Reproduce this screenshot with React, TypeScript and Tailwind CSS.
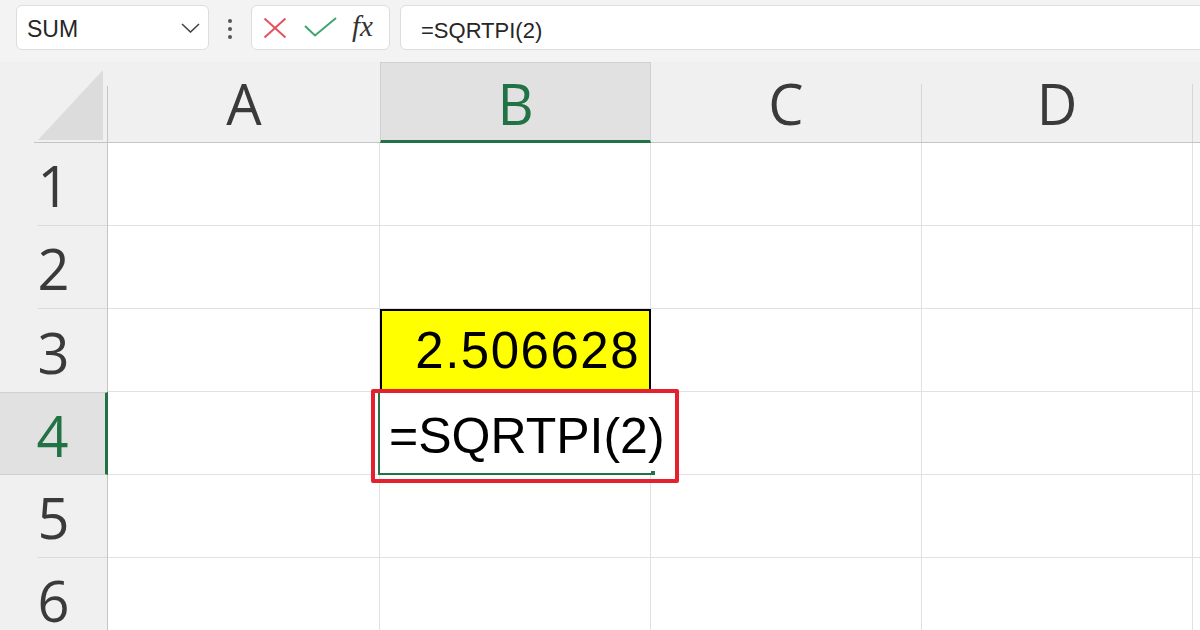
import React from "react";

const GREEN = "#217346";

function HeaderLabel({ children, green }: { children: React.ReactNode; green?: boolean }) {
  return (
    <span
      className={`flex-1 flex items-center justify-center pt-[2px] text-[56px] leading-none font-['Open_Sans',sans-serif] ${
        green ? "text-[#217346]" : "text-[#3a3a3a]"
      }`}
    >
      {children}
    </span>
  );
}

export default function App() {
  const rows = [1, 2, 3, 4, 5, 6];
  return (
    <div className="w-[1200px] h-[630px] overflow-hidden bg-white font-['Liberation_Sans',Arial,sans-serif]">
      {/* Formula bar */}
      <div className="h-[62px] bg-[#f3f3f3] flex items-start pt-[5px] pl-[16px] overflow-hidden">
        <div className="w-[193px] h-[45px] shrink-0 bg-white border border-[#dddddd] rounded-[6px] flex items-center pl-[10px] pr-[8px] pt-[3px]">
          <span className="flex-1 text-[23px] leading-none text-[#262626]">SUM</span>
          <svg width="19" height="10" viewBox="0 0 19 10" className="mb-[2px]">
            <polyline points="1,1 9.5,9 18,1" fill="none" stroke="#444" strokeWidth="1.6" />
          </svg>
        </div>
        <div className="w-[42px] h-[45px] shrink-0 flex flex-col items-center justify-center gap-[4px] pt-[3px]">
          <div className="w-[4px] h-[4px] rounded-full bg-[#555]" />
          <div className="w-[4px] h-[4px] rounded-full bg-[#555]" />
          <div className="w-[4px] h-[4px] rounded-full bg-[#555]" />
        </div>
        <div className="w-[139px] h-[45px] shrink-0 bg-white border border-[#dddddd] rounded-[6px] flex items-center pl-[11px]">
          <svg width="24" height="22" viewBox="0 0 24 22">
            <line x1="1.5" y1="1.5" x2="22.5" y2="20.5" stroke="#e4525f" strokeWidth="2" />
            <line x1="22.5" y1="1.5" x2="1.5" y2="20.5" stroke="#e4525f" strokeWidth="2" />
          </svg>
          <svg width="33" height="20" viewBox="0 0 33 20" className="ml-[17px] -mt-[2px]">
            <polyline points="1,9 11,18.5 32,1" fill="none" stroke="#3fa46e" strokeWidth="2" />
          </svg>
          <span className="ml-[15px] text-[29px] leading-none italic text-[#333] font-['Liberation_Serif',serif] -mt-[2px]">
            fx
          </span>
        </div>
        <div className="ml-[10px] w-[820px] h-[45px] shrink-0 bg-white border border-[#dddddd] rounded-[6px] flex items-center pl-[20px] pt-[6px]">
          <span className="text-[22px] leading-none text-[#262626]">=SQRTPI(2)</span>
        </div>
      </div>

      {/* Grid */}
      <div className="relative grid grid-cols-[108px_272px_271px_271px_271px_1fr] grid-rows-[81px_repeat(6,83px)]">
        {/* corner */}
        <div className="bg-[#f0f0f0]">
          <svg width="108" height="81" viewBox="0 0 108 81">
            <polygon points="38,78 103,8 103,78" fill="#dcdcdc" />
            <line x1="107.5" y1="24" x2="107.5" y2="81" stroke="#c4c4c4" strokeWidth="1" />
            <line x1="34" y1="80.5" x2="108" y2="80.5" stroke="#c4c4c4" strokeWidth="1" />
          </svg>
        </div>
        {/* A */}
        <div className="bg-[#f0f0f0] border-b border-[#c4c4c4] flex">
          <HeaderLabel>A</HeaderLabel>
        </div>
        {/* B */}
        <div className="bg-[#e1e1e1] border-x border-t border-[#d0d0d0] border-b-[3px] border-b-[#217346] flex">
          <HeaderLabel green>B</HeaderLabel>
        </div>
        {/* C */}
        <div className="bg-[#f0f0f0] border-b border-[#c4c4c4] flex">
          <HeaderLabel>C</HeaderLabel>
          <div className="w-px h-[58px] self-end bg-[#d6d6d6]" />
        </div>
        {/* D */}
        <div className="bg-[#f0f0f0] border-b border-[#c4c4c4] flex">
          <HeaderLabel>D</HeaderLabel>
          <div className="w-px h-[58px] self-end bg-[#d6d6d6]" />
        </div>
        {/* E */}
        <div className="bg-[#f0f0f0] border-b border-[#c4c4c4]" />

        {rows.map((r) => (
          <React.Fragment key={r}>
            {r === 4 ? (
              <div className="bg-[#e1e1e1] border-y border-[#d0d0d0] border-r-[3px] border-r-[#217346] flex">
                <HeaderLabel green>{r}</HeaderLabel>
              </div>
            ) : (
              <div className="bg-[#f0f0f0] border-r border-[#c4c4c4] flex flex-col">
                <HeaderLabel>{r}</HeaderLabel>
                {r !== 3 && <div className="h-px ml-[38px] bg-[#dadada]" />}
              </div>
            )}
            <div className="border-r border-b border-[#e1e1e1]" />
            {r === 3 ? (
              <div className="bg-[#ffff00] border-2 border-black flex items-center justify-end pr-[9px]">
                <span className="text-[51px] leading-none tracking-[1.5px] text-black">2.506628</span>
              </div>
            ) : (
              <div className="border-r border-b border-[#e1e1e1]" />
            )}
            <div className="border-r border-b border-[#e1e1e1]" />
            <div className="border-r border-b border-[#e1e1e1]" />
            <div className="border-b border-[#e1e1e1]" />
          </React.Fragment>
        ))}

        {/* in-cell editor for B4 */}
        <div className="absolute left-[378px] top-[330px] w-[298px] h-[83px] bg-white border-l-2 border-[#217346] flex flex-col">
          <div className="flex-1 flex items-center pl-[9px] pt-[8px]">
            <span className="text-[50px] leading-none text-black whitespace-nowrap">=SQRTPI(2)</span>
          </div>
          <div className="h-[4px] flex items-end">
            <div className="w-[271px] h-[2px] bg-[#217346]" />
            <div className="w-[4px] h-[4px] bg-[#217346]" />
          </div>
        </div>

        {/* red annotation box */}
        <div className="absolute left-[371px] top-[327px] w-[308px] h-[94px] border-[4px] border-[#e3212f] rounded-[2px]" />
      </div>
    </div>
  );
}
